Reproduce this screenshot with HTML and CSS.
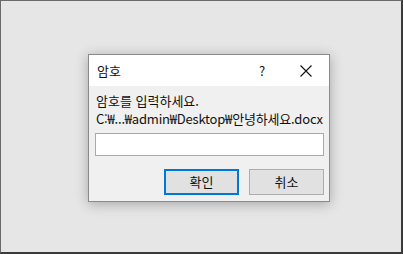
FILE: index.html
```html
<!DOCTYPE html>
<html lang="ko">
<head>
<meta charset="utf-8">
<link rel="stylesheet" href="styles.css">
</head>
<body>
<div class="screen">
  <div class="dialog">
    <div class="titlebar">
      <span class="title">암호</span>
      <span class="tb-btn help">?</span>
      <span class="tb-btn close">
        <svg width="12" height="12" viewBox="0 0 12 12"><path d="M0.5 0.5 L11.5 11.5 M11.5 0.5 L0.5 11.5" stroke="#111" stroke-width="1.1" fill="none"/></svg>
      </span>
    </div>
    <div class="content">
      <div class="msg">암호를 입력하세요.</div>
      <div class="msg path">C:₩...₩admin₩Desktop₩안녕하세요.docx</div>
      <div class="input"></div>
      <div class="buttons">
        <div class="btn primary">확인</div>
        <div class="btn">취소</div>
      </div>
    </div>
  </div>
</div>
</body>
</html>
```
FILE: styles.css
```css
html, body {
  margin: 0;
  padding: 0;
}
body {
  width: 403px;
  height: 254px;
  font-family: "Noto Sans CJK KR", "Noto Sans", sans-serif;
  font-size: 13px;
  color: #111;
}
.screen {
  box-sizing: border-box;
  width: 403px;
  height: 254px;
  background: #e6e6e6;
  border-top: 1px solid #6a6a6a;
  border-left: 1px solid #6a6a6a;
  border-right: 2px solid #3a3a3a;
  border-bottom: 2px solid #3a3a3a;
  padding: 53px 0 0 87px;
}
.dialog {
  box-sizing: border-box;
  width: 242px;
  height: 148px;
  border: 1px solid #8a8a8a;
  background: #f0f0f0;
  box-shadow: 0 2px 12px rgba(0, 0, 0, 0.28);
  display: flex;
  flex-direction: column;
}
.titlebar {
  height: 31px;
  background: #fff;
  display: flex;
  align-items: center;
}
.title {
  flex: 1;
  padding-left: 8px;
  line-height: 16px;
  padding-top: 1px;
}
.tb-btn {
  display: flex;
  align-items: center;
  justify-content: center;
  height: 31px;
}
.help {
  width: 46px;
  font-size: 13px;
  padding-left: 2px;
}
.close {
  width: 42px;
  padding-right: 2px;
}
.content {
  flex: 1;
  padding: 6px 5px 0 6px;
  display: flex;
  flex-direction: column;
}
.msg {
  line-height: 18px;
  white-space: nowrap;
  padding-left: 1px;
}
.path {
  letter-spacing: -0.2px;
}
.input {
  box-sizing: border-box;
  margin-top: 5px;
  height: 23px;
  width: 229px;
  background: #fff;
  border: 1px solid #a9a9a9;
}
.buttons {
  display: flex;
  justify-content: flex-end;
  gap: 10px;
  margin-top: 13px;
}
.btn {
  box-sizing: border-box;
  width: 75px;
  height: 26px;
  border: 1px solid #adadad;
  background: #e1e1e1;
  display: flex;
  align-items: center;
  justify-content: center;
  line-height: 16px;
}
.btn.primary {
  border: 2px solid #0078d7;
}
```
